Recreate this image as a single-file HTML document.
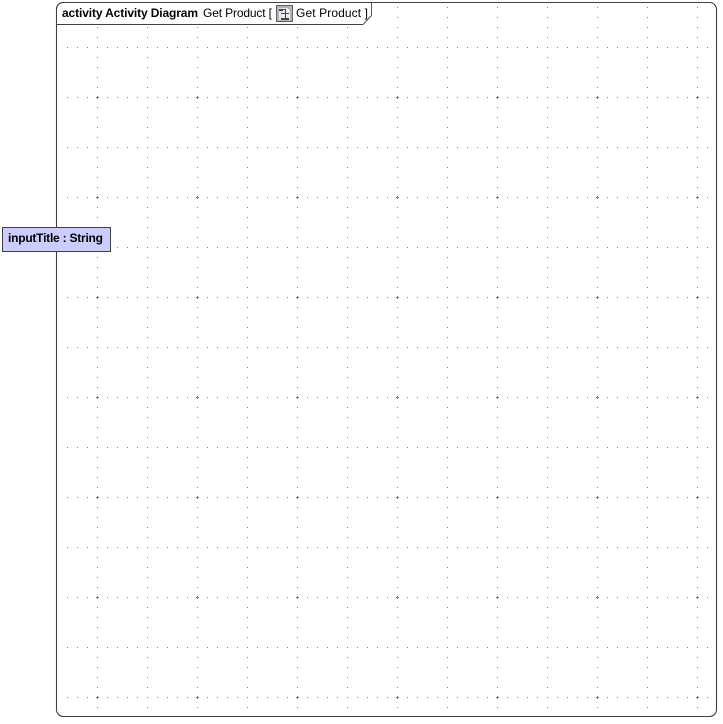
<!DOCTYPE html>
<html><head><meta charset="utf-8"><style>
html,body{margin:0;padding:0;background:#fff;width:723px;height:724px;overflow:hidden}
svg{position:absolute;left:0;top:0}
text{font-family:"Liberation Sans",sans-serif;font-size:12px;fill:#000}
.b{font-weight:bold}
</style></head><body>
<svg width="723" height="724" viewBox="0 0 723 724" shape-rendering="crispEdges">
<defs>
<pattern id="h" x="57" y="47" width="10" height="50" patternUnits="userSpaceOnUse"><rect width="1" height="1" fill="#808080"/></pattern>
<pattern id="v" x="97" y="7" width="50" height="10" patternUnits="userSpaceOnUse"><rect width="1" height="1" fill="#808080"/></pattern>
<pattern id="p" x="96" y="96" width="100" height="100" patternUnits="userSpaceOnUse"><rect x="1" y="0" width="1" height="3" fill="#808080"/><rect x="0" y="1" width="3" height="1" fill="#808080"/></pattern>
</defs>
<rect x="58" y="4" width="658" height="711" fill="url(#h)"/>
<rect x="58" y="4" width="658" height="711" fill="url(#v)"/>
<rect x="58" y="4" width="658" height="711" fill="url(#p)"/>
<rect x="56.500" y="2.500" width="660" height="714" rx="7" ry="7" fill="none" stroke="#404040" stroke-width="1.100" shape-rendering="auto"/>
<path d="M57 24.500H363L372 15V3H64Q57 3 57 10Z" fill="#fff"/>
<path d="M57 24.500H363" fill="none" stroke="#404040" stroke-width="1"/>
<path d="M363 24.500L371.500 15.500V3" fill="none" stroke="#555" stroke-width="1" shape-rendering="auto"/>
<path d="M56.500 10Q56.500 2.500 64 2.500H372" fill="none" stroke="#404040" stroke-width="1.100" shape-rendering="auto"/>
<text x="62" y="17" class="b" textLength="136" lengthAdjust="spacing">activity Activity Diagram</text>
<text x="203" y="17" textLength="69" lengthAdjust="spacing">Get Product [</text>
<text x="296" y="17" textLength="72" lengthAdjust="spacing">Get Product ]</text>
<g>
<rect x="276.500" y="5.500" width="16" height="16" fill="#b4b4b4" stroke="#606060"/>
<path d="M279 8h8l3 3V20H279Z" fill="#e8e8e8"/>
<path d="M287 8l3 3h-3Z" fill="#fff"/>
<rect x="279" y="9" width="4" height="2" fill="#445"/>
<rect x="283" y="9" width="3" height="1" fill="#556"/>
<rect x="285" y="9" width="1" height="9" fill="#445"/>
<rect x="281" y="13" width="8" height="1" fill="#445"/>
<rect x="281" y="18" width="8" height="2" fill="#445"/>
</g>
<rect x="2.500" y="227.500" width="108" height="24" fill="#ccccff" stroke="#404040"/>
<text x="8" y="242" class="b" textLength="95" lengthAdjust="spacing">inputTitle : String</text>
</svg>
</body></html>
